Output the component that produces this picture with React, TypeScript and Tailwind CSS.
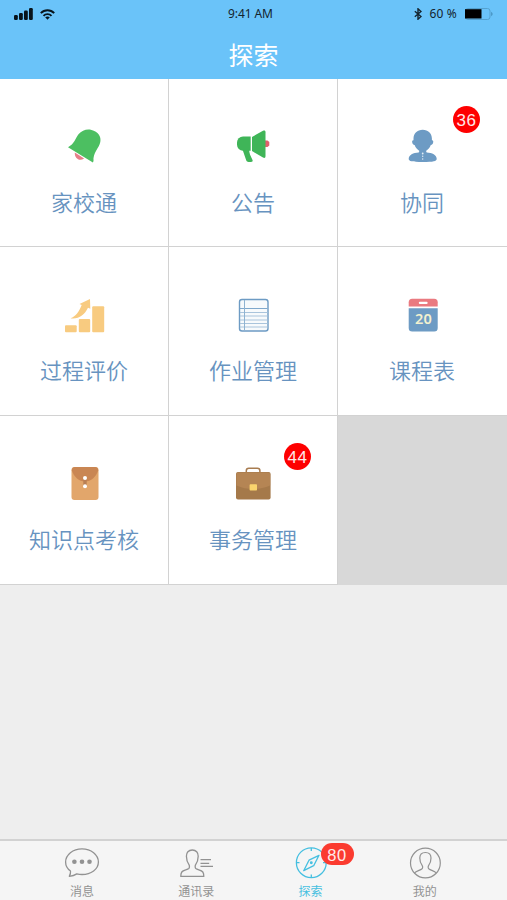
import type { ReactNode } from "react";

type Feature = {
  key: string;
  label: string;
  icon: ReactNode;
  badge?: number;
};

type Tab = {
  key: string;
  label: string;
  icon: ReactNode;
  active?: boolean;
  badge?: number;
};

function BellIcon() {
  return (
    <svg className="h-12 w-12" viewBox="0 0 48 48">
      <path d="M14.800 30.500c-.5 5.500 4.500 9.500 9.300 6z" fill="#e57f88" />
      <path d="M8 25.300c6.500-3.500 7-8.500 10.500-13C22 8.200 27 6.800 31.500 8c6.500 1.500 10 6.500 8.800 12-1.200 6-7.600 11-6.800 19l-.6 1.500z" fill="#4cbf61" />
    </svg>
  );
}

function MegaphoneIcon() {
  return (
    <svg className="h-12 w-12" viewBox="0 0 48 48" fill="#3fb558">
      <path d="M36 18.500h2.500l1.800 1.500v3.500l-1.800 1.400H36z" fill="#e0606c" />
      <path d="M21.700 14.600H14a6 6 0 0 0-6 6v2.200a6 6 0 0 0 6 6h7.700z" />
      <path d="M13.500 27.500h6.800c-.5 3 1.300 6.500 3.200 10.500.6 1.300-.2 2-1.500 2h-2.400c-1.200 0-2-.5-2.400-1.700z" />
      <path d="M23 15 34 8.800c1.600-.8 2.500-.2 2.500 1.500v23.800c0 1.700-.9 2.300-2.500 1.500L23 29z" />
    </svg>
  );
}

function PersonIcon() {
  return (
    <svg className="h-12 w-12" viewBox="0 0 48 48" fill="#6d9bc4">
      <path d="M24.700 7.700c-5.400 0-9.200 3.600-9.200 8.800v1.800c-1.300-.2-1.600 1.100-1.200 2.500.4 1.400 1.200 2.200 2.300 2.100 1 2.800 2.800 4.600 4.800 6l-.7 1.600c-5.500.3-10 2.500-10 6.300 0 2.600 3.200 3.200 14 3.200s14-.6 14-3.200c0-3.800-4.500-6-10-6.300l-.7-1.600c2-1.400 3.800-3.200 4.800-6 1.100.1 1.900-.7 2.300-2.100.4-1.400.1-2.700-1.200-2.500v-1.800c0-5.200-3.800-8.800-9.200-8.800z" />
      <g fill="#e3edf5">
        <circle cx="24.700" cy="31.500" r=".9" />
        <circle cx="24.700" cy="34.300" r=".7" />
        <circle cx="24.700" cy="37" r=".7" />
      </g>
    </svg>
  );
}

function GrowthIcon() {
  return (
    <svg className="h-12 w-12" viewBox="0 0 48 48" fill="#f8cb80">
      <rect x="5" y="35.300" width="11.700" height="7" rx="1" />
      <rect x="18.800" y="29" width="11.400" height="13.300" rx="1" />
      <rect x="32.200" y="16.300" width="12" height="26" rx="1" />
      <path d="M10.500 28.300c5.500-2 8.300-6.500 11.200-13.300l-2.200-1L30 9l.3 9.700-2.300-1C24.500 25 18.500 29.500 10.500 28.300z" />
    </svg>
  );
}

function NotebookIcon() {
  return (
    <svg className="h-12 w-12" viewBox="0 0 48 48" fill="none">
      <rect x="10.500" y="9.500" width="28.500" height="31.500" rx="2.500" fill="#f7fafc" stroke="#6d9bc4" strokeWidth="1.400" />
      <path d="M11 18.500h27.500" stroke="#7fa8cc" />
      <path d="M11 22.500h27.500M11 26h27.500M11 30h27.500M11 33.500h27.500M11 37h27.500" stroke="#a9c4dc" />
      <path d="M15.500 10v30.500" stroke="#8fb3d1" />
    </svg>
  );
}

function CalendarIcon() {
  return (
    <svg className="h-12 w-12" viewBox="0 0 48 48">
      <path d="M10.700 16.500v-4.300a3.500 3.500 0 0 1 3.500-3.500h22a3.500 3.500 0 0 1 3.500 3.500v4.300z" fill="#ea7a80" />
      <path d="M10.700 18.200h29V38a3.500 3.500 0 0 1-3.500 3.500h-22a3.500 3.500 0 0 1-3.500-3.500z" fill="#6d9bc4" />
      <rect x="20.800" y="11.700" width="8.800" height="2.200" rx="1" fill="#fff" />
      <text x="25.400" y="34.200" textAnchor="middle" fontSize="14.500" className="fill-[#f3f1cf] font-['Noto_Sans',sans-serif] font-semibold">
        20
      </text>
    </svg>
  );
}

function EnvelopeIcon() {
  return (
    <svg className="h-12 w-12" viewBox="0 0 48 48">
      <rect x="11.500" y="8" width="27" height="33" rx="3" fill="#e2a66b" />
      <path d="M11.800 11.500a3.500 3.500 0 0 1 3.200-3.500h20a3.500 3.500 0 0 1 3.200 3.500C36 18 31 22.500 25 22.500S14 18 11.800 11.500z" fill="#c98653" />
      <path d="M23.300 18h3.400v10h-3.400z" fill="#b98055" />
      <circle cx="25" cy="19" r="2" fill="#fff" />
      <circle cx="25" cy="27.300" r="2" fill="#fff" />
    </svg>
  );
}

function BriefcaseIcon() {
  return (
    <svg className="h-12 w-12" viewBox="0 0 48 48">
      <path d="M17.300 14v-2.200a2.500 2.500 0 0 1 2.500-2.500h8.600a2.500 2.500 0 0 1 2.500 2.500V14" fill="none" stroke="#a87c50" strokeWidth="1.500" />
      <rect x="7" y="13" width="34.600" height="27.400" rx="2" fill="#a5794a" />
      <path d="M7.500 15a1.500 1.500 0 0 1 1.500-1.500h30.600a1.500 1.500 0 0 1 1.500 1.500v11.500C36 29 30 30 24.300 30S12.500 29 7.500 26.500z" fill="#b58554" />
      <rect x="20.600" y="25.300" width="7.400" height="6.200" rx=".8" fill="#fad46d" />
    </svg>
  );
}

function ChatIcon() {
  return (
    <svg className="h-[34px] w-10" viewBox="0 0 40 34" fill="none" stroke="currentColor" strokeWidth="1.300" strokeLinejoin="round">
      <path d="M7.300 30.300c1-2 1.500-3.700 1.200-5.300C5.300 22.800 3.600 19.600 3.600 16 3.600 8.700 10.900 2.800 20 2.800S36.400 8.700 36.400 16 29.100 28.500 20 28.500c-1.800 0-3.500-.2-5.200-.6-2 1.300-4.500 2.100-7.500 2.400z" />
      <g fill="currentColor" stroke="none">
        <circle cx="12.400" cy="15.700" r="2.300" />
        <circle cx="20" cy="15.700" r="2.300" />
        <circle cx="27.500" cy="15.700" r="2.300" />
      </g>
    </svg>
  );
}

function ContactsIcon() {
  return (
    <svg className="h-[34px] w-10" viewBox="0 0 40 34" fill="none" stroke="currentColor" strokeWidth="1.300" strokeLinejoin="round">
      <path d="M16.300 4c-3.800 0-6 2.600-5.900 6.300.1 3.300.8 6 2.400 8 .8 1 .9 3.400 0 4.200-1.800 1.500-5.500 1.400-7 3.500-.8 1.100-1 2.700-1 4.400h23c0-1.700-.2-3.300-1-4.400-1.500-2.100-5.200-2-7-3.500-.9-.8-.8-3.200 0-4.200 1.600-2 2.300-4.700 2.400-8C22.300 6.600 20.100 4 16.300 4z" />
      <path d="M24.500 13.700H35M24.500 17.300h8.700M24.500 20.300H37" />
    </svg>
  );
}

function CompassIcon() {
  return (
    <svg className="h-[34px] w-10" viewBox="0 0 40 34" fill="none" stroke="currentColor" strokeWidth="1.300" strokeLinejoin="round">
      <circle cx="20.300" cy="16.700" r="14.900" />
      <path d="M20.300 2v3M20.300 28.500v3M5.500 16.700h3M32 16.700h3" />
      <path d="M28 9.300 18 14.200l-5.300 10.500 10-5z" />
      <circle cx="20.300" cy="16.800" r=".8" />
    </svg>
  );
}

function MeIcon() {
  return (
    <svg className="h-[34px] w-10" viewBox="0 0 40 34" fill="none" stroke="currentColor" strokeWidth="1.200" strokeLinejoin="round">
      <circle cx="20.400" cy="17" r="14.900" />
      <path d="M9.500 27c1.500-2 5.500-2.700 7.300-4 1.200-.9 1-2.800.3-3.700-1.500-1.900-2.300-4.400-2.300-7.300 0-3.600 2.100-5.500 5.600-5.500S26 8.400 26 12c0 2.900-.8 5.400-2.300 7.300-.7.900-.9 2.800.3 3.700 1.800 1.300 5.800 2 7.300 4" />
    </svg>
  );
}

const FEATURES: Feature[] = [
  { key: "home-school", label: "家校通", icon: <BellIcon /> },
  { key: "notice", label: "公告", icon: <MegaphoneIcon /> },
  { key: "collab", label: "协同", icon: <PersonIcon />, badge: 36 },
  { key: "evaluation", label: "过程评价", icon: <GrowthIcon /> },
  { key: "homework", label: "作业管理", icon: <NotebookIcon /> },
  { key: "schedule", label: "课程表", icon: <CalendarIcon /> },
  { key: "assessment", label: "知识点考核", icon: <EnvelopeIcon /> },
  { key: "affairs", label: "事务管理", icon: <BriefcaseIcon />, badge: 44 },
];

const TABS: Tab[] = [
  { key: "messages", label: "消息", icon: <ChatIcon /> },
  { key: "contacts", label: "通讯录", icon: <ContactsIcon /> },
  { key: "explore", label: "探索", icon: <CompassIcon />, active: true, badge: 80 },
  { key: "me", label: "我的", icon: <MeIcon /> },
];

function StatusBar() {
  return (
    <div className="grid h-7 grid-cols-3 items-center px-[14px] font-['Noto_Sans',sans-serif] text-[12px] text-[#14242e]">
      <div className="flex items-center gap-[7px]">
        <svg className="h-3 w-[19px]" viewBox="0 0 19 12" fill="#08141c">
          <rect x="0" y="7" width="3.800" height="5" rx="1.200" />
          <rect x="5" y="5" width="3.800" height="7" rx="1.200" />
          <rect x="10" y="2.500" width="3.800" height="9.500" rx="1.200" />
          <rect x="15" y="0" width="3.800" height="12" rx="1.200" />
        </svg>
        <svg className="h-[11px] w-[15px]" viewBox="0 0 15 11" fill="none" stroke="#08141c" strokeWidth="1.900">
          <path d="M.8 4.200c3.700-4 9.700-4 13.400 0M3.500 6.900c2.200-2.400 5.800-2.400 8 0" />
          <path d="M5.200 8.300c1.300-1.200 3.300-1.200 4.600 0L7.500 10.800z" fill="#08141c" stroke="none" />
        </svg>
      </div>
      <span className="pr-[6px] text-center whitespace-nowrap tracking-[-0.1px]">9:41 AM</span>
      <div className="flex items-center justify-end">
        <svg className="mr-[7px] h-3 w-2" viewBox="0 0 8 12" fill="none" stroke="#14242e" strokeWidth="1.400">
          <path d="M.8 3.300 7 8.500 4 11.200V.8L7 3.500.8 8.700" />
        </svg>
        <span className="mr-[8px] whitespace-nowrap tracking-[0.2px]">60 %</span>
        <svg className="h-3 w-7" viewBox="0 0 28 12">
          <rect x=".5" y=".5" width="24.500" height="11" rx="2.500" fill="none" stroke="#54a1cf" />
          <rect x="0" y="1.200" width="16.500" height="9.300" fill="#000" />
          <path d="M26.300 3.800c1.600.9 1.600 3.500 0 4.400z" fill="#3f87b3" />
        </svg>
      </div>
    </div>
  );
}

function FeatureCell({ item }: { item: Feature }) {
  return (
    <button className="relative flex flex-col items-center border-r border-b border-[#d2d2d2] bg-white pt-[43px] nth-[3n]:border-r-0 nth-[3n]:pr-px">
      {item.icon}
      <span className="mt-[15px] text-[22px] leading-8 font-[350] whitespace-nowrap text-[#6793c0]">{item.label}</span>
      {item.badge && (
        <span className="absolute top-[27px] left-[115px] flex h-[27px] w-[27px] items-center justify-center rounded-full bg-[#fe0000] pt-[2px] font-['Liberation_Sans',sans-serif] text-[17px] leading-none tracking-[0.5px] text-[#ffeaea]">
          {item.badge}
        </span>
      )}
    </button>
  );
}

export default function App() {
  return (
    <div className="flex h-[900px] w-[507px] flex-col overflow-hidden bg-[#eeeeee] font-['Noto_Sans_CJK_SC',sans-serif]">
      <header className="h-[79px] bg-[#6ac3f9]">
        <StatusBar />
        <h1 className="mt-[6px] text-center text-[25px] leading-10 text-white">探索</h1>
      </header>

      <main className="flex-1">
        <div className="grid grid-cols-[169px_169px_169px] grid-rows-[168px_169px_169px] bg-[#d8d8d8]">
          {FEATURES.map((item) => (
            <FeatureCell key={item.key} item={item} />
          ))}
        </div>
      </main>

      <nav className="grid h-[61px] grid-cols-4 border-t-2 border-[#d2d2d2] bg-[#f5f5f5] px-[25px]">
        {TABS.map((tab) => (
          <button
            key={tab.key}
            className={`relative flex flex-col items-center pt-[5px] ${tab.active ? "text-[#45bfe0]" : "text-[#929292]"}`}
          >
            {tab.icon}
            <span className="mt-[2px] text-[12px] leading-[18px]">{tab.label}</span>
            {tab.badge && (
              <span className="absolute top-[2px] left-[67px] flex h-[22px] w-[33px] items-center justify-center rounded-full bg-[#fb3b30] pt-[2px] font-['Liberation_Sans',sans-serif] text-[16.5px] leading-none tracking-[0.5px] text-[#ffeaea]">
                {tab.badge}
              </span>
            )}
          </button>
        ))}
      </nav>
    </div>
  );
}
